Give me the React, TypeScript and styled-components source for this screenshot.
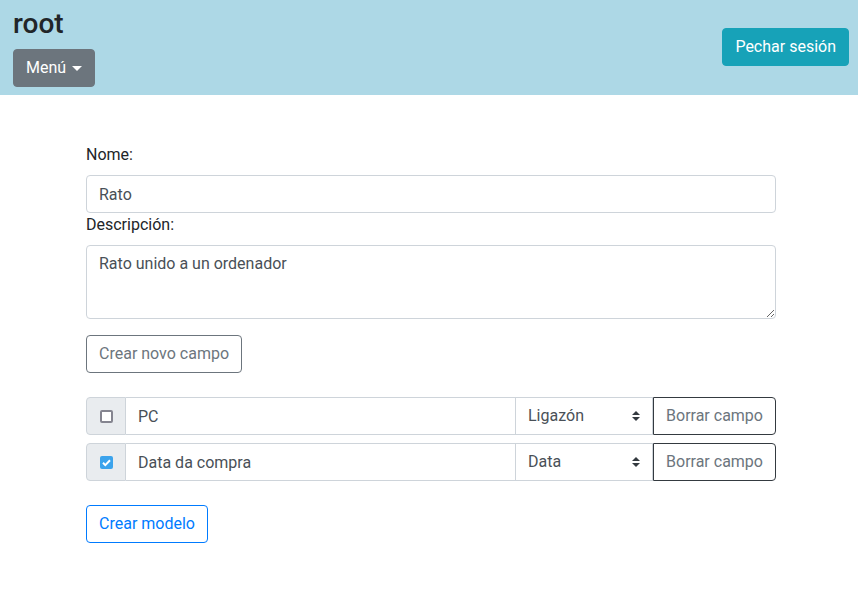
import React from "react";
import styled, { createGlobalStyle } from "styled-components";

const Global = createGlobalStyle`
  * { box-sizing: border-box; }
  body {
    margin: 0;
    font-family: Roboto, "Liberation Sans", Arial, sans-serif;
    font-size: 16px;
    line-height: 1.5;
    color: #212529;
    background: #fff;
  }
`;

const Header = styled.header`
  height: 95px;
  background: #add8e6;
  display: flex;
  justify-content: space-between;
  align-items: flex-start;
  padding: 0 9px 0 13px;
`;

const Brand = styled.div`
  display: flex;
  flex-direction: column;
  align-items: flex-start;
`;

const Title = styled.h3`
  margin: 7px 0 8px;
  font-size: 28px;
  font-weight: 500;
  line-height: 34px;
  height: 34px;
`;

const Button = styled.button<{ $variant: string }>`
  font-family: inherit;
  font-size: 16px;
  line-height: 24px;
  padding: 6px 12px;
  border-radius: 4px;
  border: 1px solid transparent;
  cursor: pointer;
  display: inline-flex;
  align-items: center;
  ${({ $variant }) => {
    switch ($variant) {
      case "secondary":
        return "background:#6c757d;border-color:#6c757d;color:#fff;";
      case "info":
        return "background:#17a2b8;border-color:#17a2b8;color:#fff;";
      case "outline-secondary":
        return "background:#fff;border-color:#6c757d;color:#6c757d;";
      case "outline-dark":
        return "background:#fff;border-color:#343a40;color:#6c757d;";
      case "outline-primary":
        return "background:#fff;border-color:#007bff;color:#007bff;";
      default:
        return "";
    }
  }}
`;

const Caret = styled.span`
  display: inline-block;
  margin-left: 6px;
  border-top: 5px solid #fff;
  border-left: 5px solid transparent;
  border-right: 5px solid transparent;
  width: 0;
  height: 0;
`;

const LogoutWrap = styled.div`
  margin-top: 28px;
`;

const Main = styled.main`
  width: 690px;
  margin: 0 0 0 86px;
  padding-top: 48px;
  display: flex;
  flex-direction: column;
  align-items: flex-start;
`;

const Label = styled.label`
  display: block;
  margin-bottom: 8px;
`;

const TextInput = styled.input`
  width: 100%;
  height: 38px;
  padding: 6px 12px;
  font-family: inherit;
  font-size: 16px;
  line-height: 24px;
  color: #495057;
  border: 1px solid #ced4da;
  border-radius: 4px;
  outline: none;
`;

const TextArea = styled.textarea`
  width: 100%;
  height: 74px;
  padding: 6px 12px;
  font-family: inherit;
  font-size: 16px;
  line-height: 24px;
  color: #495057;
  border: 1px solid #ced4da;
  border-radius: 4px;
  display: block;
  margin-bottom: 16px;
  resize: vertical;
  outline: none;
`;

const Fields = styled.div`
  width: 100%;
  display: flex;
  flex-direction: column;
  gap: 8px;
  margin: 24px 0;
`;

const Group = styled.div`
  display: flex;
  height: 38px;
  width: 100%;
`;

const Addon = styled.div`
  width: 40px;
  flex: none;
  display: flex;
  align-items: center;
  justify-content: center;
  background: #e9ecef;
  border: 1px solid #ced4da;
  border-radius: 4px 0 0 4px;
`;

const Check = styled.input`
  appearance: none;
  margin: 0 0 0 1px;
  width: 13px;
  height: 13px;
  border: 2px solid #858590;
  border-radius: 2px;
  background: #fff;
  &:checked {
    border: none;
    background: #3ba3ec
      url("data:image/svg+xml,%3csvg xmlns='http://www.w3.org/2000/svg' viewBox='0 0 13 13'%3e%3cpath fill='none' stroke='%23fff' stroke-width='2' d='M3 6.8l2.3 2.3L10 4.2'/%3e%3c/svg%3e")
      no-repeat center / 13px 13px;
  }
`;

const GroupInput = styled.input`
  flex: 1;
  min-width: 0;
  height: 38px;
  padding: 6px 12px;
  font-family: inherit;
  font-size: 16px;
  line-height: 24px;
  color: #495057;
  border: 1px solid #ced4da;
  border-left: none;
  outline: none;
`;

const Select = styled.select`
  width: 137px;
  flex: none;
  height: 38px;
  padding: 6px 28px 6px 12px;
  font-family: inherit;
  font-size: 16px;
  line-height: 24px;
  color: #495057;
  background: #fff
    url("data:image/svg+xml,%3csvg xmlns='http://www.w3.org/2000/svg' width='4' height='5' viewBox='0 0 4 5'%3e%3cpath fill='%23343a40' d='M2 0L0 2h4zm0 5L0 3h4z'/%3e%3c/svg%3e")
    no-repeat right 12px center / 8px 10px;
  border: 1px solid #ced4da;
  border-left: none;
  border-radius: 0;
  appearance: none;
  outline: none;
`;

const DeleteButton = styled(Button)`
  border-radius: 0 4px 4px 0;
  flex: none;
  width: 123px;
  justify-content: center;
  padding: 6px 0;
`;

const fields = [
  { name: "PC", type: "Ligazón", checked: false },
  { name: "Data da compra", type: "Data", checked: true },
];

export default function App() {
  return (
    <>
      <Global />
      <Header>
        <Brand>
          <Title>root</Title>
          <Button $variant="secondary">
            Menú
            <Caret />
          </Button>
        </Brand>
        <LogoutWrap>
          <Button $variant="info">Pechar sesión</Button>
        </LogoutWrap>
      </Header>
      <Main>
        <Label>Nome:</Label>
        <TextInput defaultValue="Rato" />
        <Label>Descripción:</Label>
        <TextArea defaultValue="Rato unido a un ordenador" />
        <Button $variant="outline-secondary">Crear novo campo</Button>
        <Fields>
          {fields.map((f) => (
            <Group key={f.name}>
              <Addon>
                <Check type="checkbox" defaultChecked={f.checked} />
              </Addon>
              <GroupInput defaultValue={f.name} />
              <Select defaultValue={f.type}>
                <option>Ligazón</option>
                <option>Data</option>
                <option>Texto</option>
              </Select>
              <DeleteButton $variant="outline-dark">Borrar campo</DeleteButton>
            </Group>
          ))}
        </Fields>
        <Button $variant="outline-primary">Crear modelo</Button>
      </Main>
    </>
  );
}
